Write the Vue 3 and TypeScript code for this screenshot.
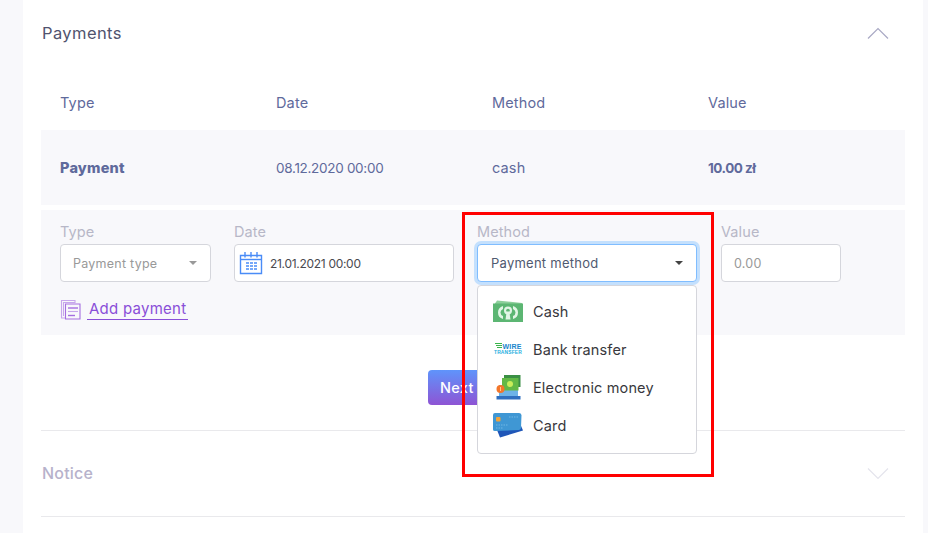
<script setup lang="ts">
const columns = ['Type', 'Date', 'Method', 'Value']
const methods = ['Cash', 'Bank transfer', 'Electronic money', 'Card']
</script>

<template>
  <div class="card">
    <section class="payments">
      <header class="section-head">
        <h2>Payments</h2>
        <svg class="chevron" width="22" height="12" viewBox="0 0 22 12">
          <path d="M1 11.5 11 1.5l10 10" fill="none" stroke="#a9a9c4" stroke-width="1.2" />
        </svg>
      </header>

      <div class="table-row table-head">
        <span v-for="col in columns" :key="col">{{ col }}</span>
      </div>
      <div class="table-row table-body">
        <strong class="wide">Payment</strong>
        <span class="digits">08.12.2020 00:00</span>
        <span>cash</span>
        <strong class="digits">10.00 zł</strong>
      </div>

      <form class="add-form" @submit.prevent>
        <div class="fields">
          <div class="field type">
            <label>Type</label>
            <div class="control select muted">Payment type<i class="caret"></i></div>
          </div>
          <div class="field date">
            <label>Date</label>
            <div class="control with-icon">
              <svg width="24" height="24" viewBox="0 0 24 24" fill="none" stroke="#4a8cf7">
                <path d="M1.5 4.5h21v18h-21z" stroke-width="1.4" />
                <path d="M1.5 8.5h21" stroke-width="1.4" />
                <path d="M6 1v5.5M12 1v5.5M18 1v5.5" stroke-width="1.4" />
                <path d="M7 12h3M11 12h3M15 12h3M7 15h3M11 15h3M15 15h3M7 18h3M11 18h3M15 18h3" stroke-width="1.5" />
              </svg>
              <span class="date-text">21.01.2021 00:00</span>
            </div>
          </div>
          <div class="field method">
            <label>Method</label>
            <div class="control select focused">Payment method<i class="caret dark"></i></div>
            <ul class="dropdown">
              <li v-for="(m, i) in methods" :key="m">
                <span class="icon">
                  <svg v-if="i === 0" width="30" height="22" viewBox="0 0 30 22">
                    <path d="M1 5 4 0.500 29 3v4H1z" fill="#8ccf9b" />
                    <rect x="0" y="3.500" width="30" height="18.500" fill="#5cb673" />
                    <path d="M5 12.500q0-5 5-6.500v3q-2.500 1-2.500 3.500t2.500 3.500v3q-5-1.500-5-6.500zM25 12.500q0-5-5-6.500v3q2.500 1 2.500 3.500t-2.500 3.500v3q5-1.500 5-6.500z" fill="#e2f5e6" />
                    <circle cx="15" cy="10.500" r="4" fill="#e2f5e6" />
                    <circle cx="15" cy="10.500" r="1.800" fill="#5cb673" />
                    <path d="M12.500 19.500h5l-1.200-8h-2.600z" fill="#e2f5e6" />
                  </svg>
                  <svg v-else-if="i === 1" width="30" height="16" viewBox="0 0 30 16">
                    <path d="M2 2.500h7M3 4.500h6M4 6.500h5" stroke="#39b54a" stroke-width="1.100" />
                    <text x="9.500" y="7.500" class="wire" textLength="19" lengthAdjust="spacingAndGlyphs">WIRE</text>
                    <text x="1" y="13" class="transfer" textLength="28" lengthAdjust="spacingAndGlyphs">TRANSFER</text>
                  </svg>
                  <svg v-else-if="i === 2" width="25" height="25" viewBox="0 0 25 25">
                    <path d="M3 21.500V10h19v11.500z" fill="#6db3e8" />
                    <path d="M8 0h16.500v12H8z" fill="#3b8f45" />
                    <path d="M6 3h16.500v12.500H6z" fill="#62b846" />
                    <circle cx="14" cy="9" r="3" fill="#c8ec5a" />
                    <circle cx="4.500" cy="14" r="4" fill="#f4762a" />
                    <path d="M4.500 12v4" stroke="#ffc98a" stroke-width="1" />
                    <path d="M0.500 21h24v3.500h-24z" fill="#2f6fc0" />
                  </svg>
                  <svg v-else width="30" height="25" viewBox="0 0 30 25">
                    <path d="M4 17 27 10.500l3 7L7 24.500z" fill="#1f56b8" />
                    <path d="M0 2q0-2 2-2h24q2 0 2.500 2l-.5 13q0 1.500-2 2L2 18q-2 0-2-1.500z" fill="#3f97d4" />
                    <rect x="3" y="4" width="4.500" height="4.500" rx="1" fill="#f2a33a" />
                    <path d="M16 4h9M3 12h12M3 15h7" stroke="#7cc0ea" stroke-width=".8" stroke-dasharray="1.500 1" />
                  </svg>
                </span>
                <span>{{ m }}</span>
              </li>
            </ul>
          </div>
          <div class="field value">
            <label>Value</label>
            <div class="control muted">0.00</div>
          </div>
        </div>

        <div class="add-row">
          <svg width="21" height="21" viewBox="0 0 21 21" fill="none" stroke="#a56ee0" stroke-width="1.100">
            <path d="M5 19H1.500V1.500H15V4" stroke="#c7a7ec" />
            <path d="M3.500 17V3.500H15" stroke="#c7a7ec" />
            <path d="M5.500 5H20V20H5.500z" />
            <path d="M8 9h10" stroke-width="1.400" />
            <path d="M8 12.500h10" stroke="#c7a7ec" />
            <path d="M8 16.500h7" stroke-width="1.400" />
          </svg>
          <a class="add-link">Add payment</a>
        </div>
      </form>

      <div class="actions">
        <button type="button" class="next">Next step</button>
      </div>
    </section>

    <section class="notice">
      <h2>Notice</h2>
      <svg width="22" height="12" viewBox="0 0 22 12">
        <path d="M1 .5l10 10 10-10" fill="none" stroke="#e4e4ec" stroke-width="1.200" />
      </svg>
    </section>

    <div class="highlight"></div>
  </div>
</template>

<style scoped>
.card {
  position: relative;
  box-sizing: border-box;
  width: 900px;
  height: 533px;
  margin-left: 23px;
  padding: 0 18px;
  background: #fff;
  font-family: Inter, "Open Sans", sans-serif;
  overflow: hidden;
}

h2 {
  margin: 0;
  padding-left: 1px;
  font-size: 16.500px;
  font-weight: 400;
  letter-spacing: 0.4px;
}

.payments {
  border-bottom: 1px solid #e9e9ec;
  padding-bottom: 25px;
}

.section-head {
  display: flex;
  align-items: center;
  justify-content: space-between;
  height: 66px;
  padding-right: 16px;
  color: #50536e;
}

.table-row {
  display: grid;
  grid-template-columns: repeat(4, 216px);
  padding: 0 19px;
  align-items: center;
  font-size: 14.500px;
  color: #5f6a9c;
  letter-spacing: 0.15px;
}

.table-head {
  height: 55px;
  padding-top: 9px;
}

.table-body {
  height: 75px;
  background: #f8f8fb;
}

.table-body strong {
  font-weight: 700;
}

.table-body .wide {
  font-weight: 800;
  letter-spacing: 0.2px;
}

.table-body .digits {
  font-size: 13.500px;
  letter-spacing: -0.3px;
}

.table-body strong.digits {
  letter-spacing: -0.5px;
}

.add-form {
  margin-top: 5px;
  height: 125px;
  padding: 12px 19px 0;
  box-sizing: border-box;
  background: #f8f8fb;
}

.fields {
  display: flex;
  gap: 23px;
}

.field {
  position: relative;
}

.field label {
  display: block;
  height: 22px;
  font-size: 14.500px;
  line-height: 20px;
  color: #b7b7c7;
  letter-spacing: 0.1px;
}

.type .control { width: 151px; }
.date .control { width: 220px; }
.method .control { width: 220px; }
.value { margin-left: 1px; }
.value .control { width: 120px; }

.control {
  display: flex;
  align-items: center;
  box-sizing: border-box;
  height: 38px;
  padding: 0 12px;
  background: #fff;
  border: 1px solid #d5d6dc;
  border-radius: 4px;
  font-size: 12.500px;
  letter-spacing: 0.25px;
  color: #4a4a50;
}

.muted {
  color: #999;
}

.select {
  justify-content: space-between;
}

.focused {
  padding-left: 13px;
  border-color: #80bdff;
  box-shadow: 0 0 0 3px #c4e0fd;
  color: #505a70;
  font-size: 13px;
}

.caret {
  width: 0;
  height: 0;
  margin-right: 1px;
  border-left: 4px solid transparent;
  border-right: 4px solid transparent;
  border-top: 4px solid #999;
}

.caret.dark {
  border-top-color: #444;
}

.with-icon {
  gap: 7px;
  padding-left: 4px;
}

.date-text {
  font-size: 12px;
  letter-spacing: -0.3px;
}

.dropdown {
  position: absolute;
  z-index: 2;
  top: 63px;
  left: 0;
  box-sizing: border-box;
  width: 220px;
  height: 169px;
  margin: 0;
  padding: 6px 0 0;
  list-style: none;
  background: #fff;
  border: 1px solid #d5d6dc;
  border-radius: 4px;
}

.dropdown li {
  display: flex;
  align-items: center;
  height: 38px;
  padding-left: 15px;
  font-size: 14.500px;
  color: #38383d;
  letter-spacing: 0.15px;
}

.icon {
  display: flex;
  flex: none;
  justify-content: center;
  width: 30px;
  margin-right: 10px;
}

.wire {
  font-family: "Liberation Sans", sans-serif;
  font-size: 6.500px;
  font-weight: 700;
  fill: #1a86cc;
}

.transfer {
  font-family: "Liberation Sans", sans-serif;
  font-size: 4.500px;
  font-weight: 700;
  fill: #25aee0;
}

.add-row {
  display: flex;
  align-items: center;
  gap: 6px;
  margin-top: 17px;
}

.add-link {
  padding: 0 2px 1px;
  font-size: 15px;
  color: #8a4fd8;
  border-bottom: 1px solid #8a4fd8;
  letter-spacing: 0.25px;
}

.actions {
  display: flex;
  justify-content: center;
  margin-top: 35px;
}

.next {
  width: 90px;
  height: 35px;
  padding: 0 0 0 12px;
  border: 0;
  border-radius: 4px;
  background: linear-gradient(#5f94fb, #8e54d4);
  color: #fff;
  font-family: inherit;
  font-size: 14.500px;
  font-weight: 500;
  letter-spacing: 0.3px;
  word-spacing: 1px;
  text-align: left;
  white-space: nowrap;
}

.notice {
  display: flex;
  align-items: center;
  justify-content: space-between;
  height: 85px;
  padding-right: 16px;
  border-bottom: 1px solid #e9e9ec;
  color: #b7b2cb;
}

.notice h2 {
  margin-top: -2px;
  font-size: 16px;
  font-weight: 500;
  letter-spacing: 0.2px;
}

.highlight {
  position: absolute;
  z-index: 3;
  top: 212px;
  left: 439px;
  width: 252px;
  height: 265px;
  box-sizing: border-box;
  border: 3px solid #f00;
  pointer-events: none;
}
</style>

<style>
html,
body {
  margin: 0;
  height: 100%;
  overflow: hidden;
  background: #f8f8fb;
}
</style>
